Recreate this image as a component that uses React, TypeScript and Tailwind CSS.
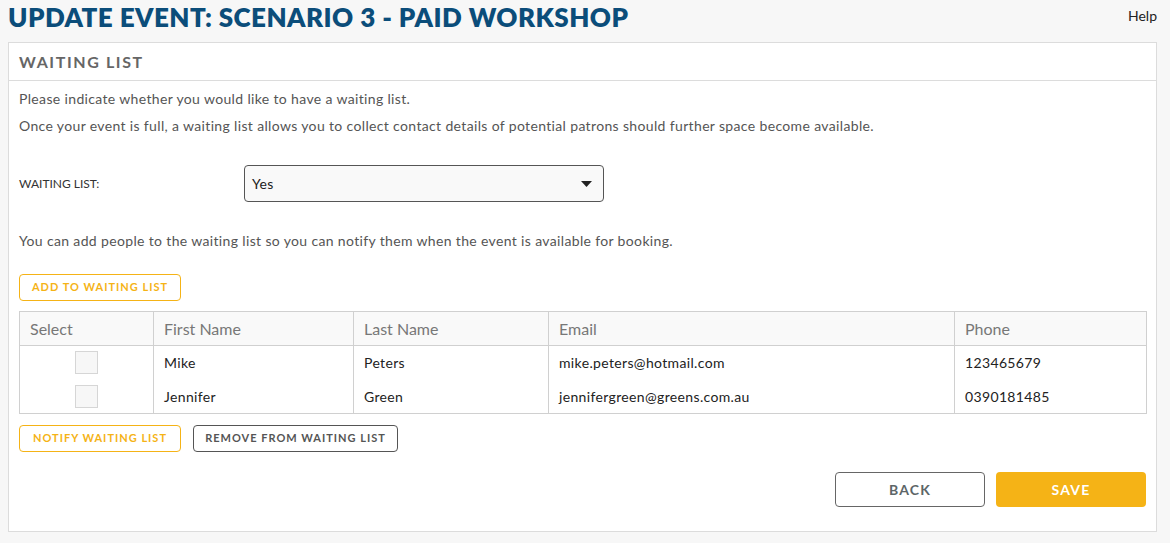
const ROWS = [
  { first: 'Mike', last: 'Peters', email: 'mike.peters@hotmail.com', phone: '123465679' },
  { first: 'Jennifer', last: 'Green', email: 'jennifergreen@greens.com.au', phone: '0390181485' },
]

const COLS = [
  ['Select', 'w-[134px]'],
  ['First Name', 'w-[200px]'],
  ['Last Name', 'w-[195px]'],
  ['Email', 'w-[406px]'],
  ['Phone', ''],
]

export default function App() {
  return (
    <div className="min-h-screen bg-[#f7f7f7] pl-[8px] pr-[13px] font-['Lato',sans-serif] text-[#555]">
      <header className="flex items-start justify-between h-[42px]">
        <h1 className="text-[26px] leading-[32px] font-extrabold tracking-[0.45px] text-[#0b4d7a] pt-[1px]">
          UPDATE EVENT: SCENARIO 3 - PAID WORKSHOP
        </h1>
        <a className="text-[14px] text-[#222] mt-[5px]">Help</a>
      </header>

      <section className="bg-white border border-[#dcdcdc] h-[490px]">
        <div className="h-[38px] border-b border-[#dcdcdc] flex items-center px-[10px]">
          <h2 className="text-[16px] font-bold tracking-[1.6px] text-[#666]">WAITING LIST</h2>
        </div>

        <div className="px-[10px] text-[14px] tracking-[0.35px]">
          <p className="mt-[9px] leading-[17px]">Please indicate whether you would like to have a waiting list.</p>
          <p className="mt-[10px] leading-[17px]">
            Once your event is full, a waiting list allows you to collect contact details of potential patrons should further space become available.
          </p>

          <div className="flex items-center mt-[31px]">
            <label className="w-[225px] text-[12px] tracking-normal text-[#333]">WAITING LIST:</label>
            <div className="w-[360px] h-[37px] rounded-[4px] border border-[#555] bg-[#f9f9f9] flex items-center justify-between pl-[7px] pr-[11px]">
              <span className="text-[14px] text-[#222]">Yes</span>
              <svg width="11" height="6" viewBox="0 0 11 6"><path d="M0 0h11L5.5 6z" fill="#222" /></svg>
            </div>
          </div>

          <p className="mt-[30px] leading-[17px]">
            You can add people to the waiting list so you can notify them when the event is available for booking.
          </p>

          <button className="mt-[25px] h-[27px] w-[162px] rounded-[4px] border border-[#f5b316] text-[11px] font-bold tracking-[1px] text-[#f5b316]">
            ADD TO WAITING LIST
          </button>

          <table className="mt-[10px] w-[1128px] border border-[#d0d0d0] border-collapse">
            <thead>
              <tr className="bg-[#f9f9f9] h-[34px] text-left">
                {COLS.map(([h, w]) => (
                  <th key={h} className={`${w} border border-[#d0d0d0] px-[10px] text-[16px] font-normal tracking-normal text-[#777]`}>{h}</th>
                ))}
              </tr>
            </thead>
            <tbody>
              {ROWS.map(r => (
                <tr key={r.email} className="h-[34px] text-[#222]">
                  <td className="border-x border-[#d0d0d0]">
                    <div className="mx-auto w-[23px] h-[23px] bg-[#f7f7f7] border border-[#d6d6d6]" />
                  </td>
                  <td className="border-x border-[#d0d0d0] px-[10px]">{r.first}</td>
                  <td className="border-x border-[#d0d0d0] px-[10px]">{r.last}</td>
                  <td className="border-x border-[#d0d0d0] px-[10px]">{r.email}</td>
                  <td className="border-x border-[#d0d0d0] px-[10px]">{r.phone}</td>
                </tr>
              ))}
            </tbody>
          </table>

          <div className="flex gap-[12px] mt-[11px]">
            <button className="h-[27px] w-[162px] rounded-[4px] border border-[#f5b316] text-[11px] font-bold tracking-[1px] text-[#f5b316]">
              NOTIFY WAITING LIST
            </button>
            <button className="h-[27px] w-[205px] rounded-[4px] border border-[#555] text-[11px] font-bold tracking-[1px] text-[#555]">
              REMOVE FROM WAITING LIST
            </button>
          </div>

          <div className="flex justify-end gap-[11px] mt-[20px]">
            <button className="h-[35px] w-[150px] rounded-[4px] border border-[#666] text-[14px] font-bold tracking-[1.2px] text-[#5d6668]">
              BACK
            </button>
            <button className="h-[35px] w-[150px] rounded-[4px] bg-[#f5b316] text-[14px] font-bold tracking-[1.2px] text-white">
              SAVE
            </button>
          </div>
        </div>
      </section>
    </div>
  )
}
